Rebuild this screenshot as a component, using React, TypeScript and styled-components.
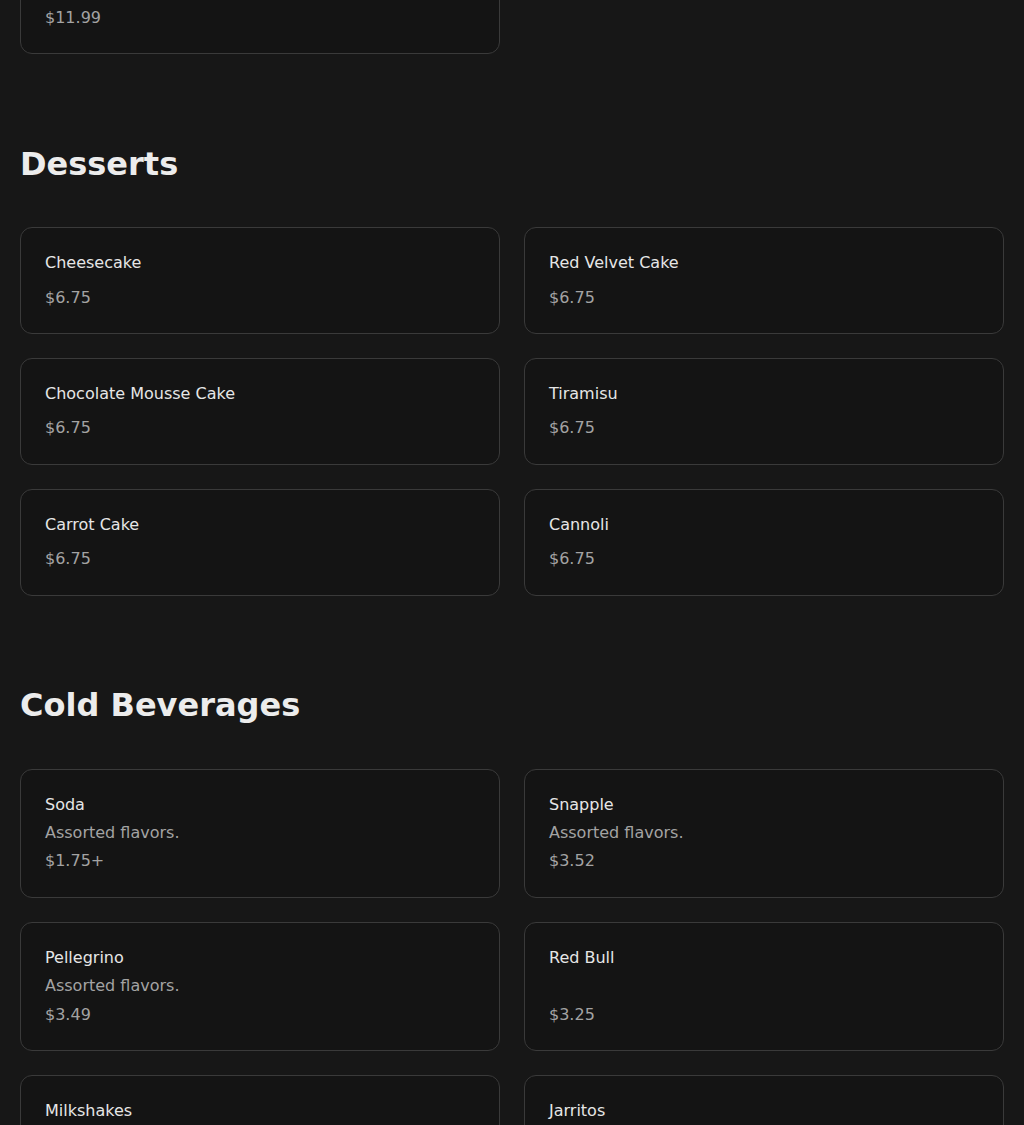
import React from "react"
import styled, { createGlobalStyle } from "styled-components"

interface MenuItem {
  name: string
  description?: string
  price: string
}

interface MenuSection {
  title: string
  items: MenuItem[]
}

const sections: MenuSection[] = [
  {
    title: "Desserts",
    items: [
      { name: "Cheesecake", price: "$6.75" },
      { name: "Red Velvet Cake", price: "$6.75" },
      { name: "Chocolate Mousse Cake", price: "$6.75" },
      { name: "Tiramisu", price: "$6.75" },
      { name: "Carrot Cake", price: "$6.75" },
      { name: "Cannoli", price: "$6.75" },
    ],
  },
  {
    title: "Cold Beverages",
    items: [
      { name: "Soda", description: "Assorted flavors.", price: "$1.75+" },
      { name: "Snapple", description: "Assorted flavors.", price: "$3.52" },
      { name: "Pellegrino", description: "Assorted flavors.", price: "$3.49" },
      { name: "Red Bull", price: "$3.25" },
      { name: "Milkshakes", description: "Assorted flavors.", price: "$6.99" },
      { name: "Jarritos", description: "Assorted flavors.", price: "$3.25" },
    ],
  },
]

const GlobalStyle = createGlobalStyle`
  html, body {
    margin: 0;
    padding: 0;
    background: #171717;
  }
  body {
    font-family: "DejaVu Sans", "Liberation Sans", sans-serif;
    color: #e8e8e8;
  }
`

export default function App() {
  return (
    <>
      <GlobalStyle />
      <Page>
        {/* tail of the previous section, mostly above the fold */}
        <Grid>
          <Item name="Chicken Parmesan Hero" price="$11.99" />
        </Grid>
        {sections.map((section) => (
          <Section key={section.title}>
            <Heading>{section.title}</Heading>
            <Grid>
              {section.items.map((item) => (
                <Item key={item.name} {...item} />
              ))}
            </Grid>
          </Section>
        ))}
      </Page>
    </>
  )
}

function Item({ name, description, price }: MenuItem) {
  return (
    <Card>
      <Name>{name}</Name>
      <Description>{description}</Description>
      <Price>{price}</Price>
    </Card>
  )
}

const Page = styled.main`
  display: flex;
  flex-direction: column;
  gap: 90.5px;
  padding: 0 20px 60px;
  margin-top: -52.5px;
`

const Section = styled.section`
  display: flex;
  flex-direction: column;
`

const Heading = styled.h2`
  margin: 0 0 44.5px;
  font-size: 32px;
  line-height: 38px;
  font-weight: 700;
  color: #ececec;
`

const Grid = styled.div`
  display: grid;
  grid-template-columns: repeat(2, 1fr);
  gap: 24px;
`

const Card = styled.article`
  display: flex;
  flex-direction: column;
  gap: 6px;
  padding: 24px;
  border: 1px solid #3a3a3a;
  border-radius: 12px;
  background: #141414;
  font-size: 16px;
  line-height: 1.4;
`

const Name = styled.div`
  color: #e6e6e6;
`

const Description = styled.div`
  color: #a3a3a3;
`

const Price = styled.div`
  margin-top: auto;
  color: #a3a3a3;
`
